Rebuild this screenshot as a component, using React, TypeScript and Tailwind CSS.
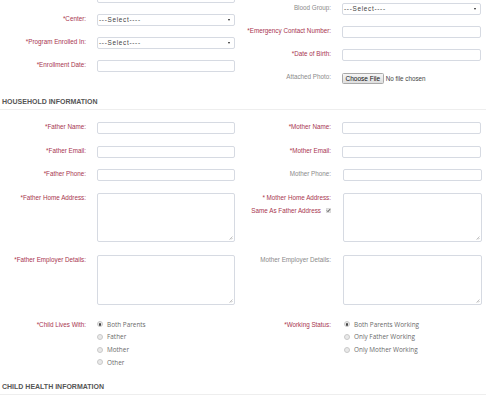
import type { ReactNode } from 'react'

const RED = 'text-[#a8354f]'
const GRAY = 'text-[#8a8a8a]'

function Label({ text, req }: { text: string; req?: boolean }) {
  return (
    <div className={`w-[86px] shrink-0 text-right text-[6.3px] leading-[9px] whitespace-nowrap ${req ? RED : GRAY}`}>
      {text}
    </div>
  )
}

function Field({ label, req, children }: { label?: string; req?: boolean; children: ReactNode }) {
  return (
    <div className="flex items-start w-[245px]">
      {label ? <Label text={label} req={req} /> : <div className="w-[86px] shrink-0" />}
      <div className="ml-[11px] w-[138px]">{children}</div>
    </div>
  )
}

function TextInput() {
  return <div className="h-[12px] w-full rounded-[2px] border border-[#d6dae2] bg-white" />
}

function TextArea({ h }: { h: string }) {
  return (
    <div className={`relative w-full rounded-[2px] border border-[#d6dae2] bg-white ${h}`}>
      {/* resize grip */}
      <svg className="absolute right-[1px] bottom-[1px]" width="4" height="4" viewBox="0 0 4 4">
        <path d="M0.5 3.5 L3.5 0.5 M2 3.5 L3.5 2" stroke="#9a9a9a" strokeWidth="0.6" />
      </svg>
    </div>
  )
}

function Select() {
  return (
    <div className="relative h-[12px] w-full rounded-[2px] border border-[#d6dae2] bg-white">
      <span className="absolute left-[1px] top-0 text-[6.4px] leading-[10px] tracking-[0.7px] text-[#444]">---Select----</span>
      <span className="absolute right-[4px] top-[4px] h-0 w-0 border-x-[1.5px] border-t-[2.5px] border-x-transparent border-t-[#222]" />
    </div>
  )
}

function Radio({ label, checked }: { label: string; checked?: boolean }) {
  return (
    <div className="flex h-[12.7px] items-center gap-[4px]">
      <span className="flex h-[6px] w-[6px] items-center justify-center rounded-full border border-[#c9c9c9] bg-[#e9e9e9]">
        {checked && <span className="h-[2.5px] w-[2.5px] rounded-full bg-[#444]" />}
      </span>
      <span className="font-['Open_Sans',sans-serif] text-[6.4px] text-[#6a6a6a]">{label}</span>
    </div>
  )
}

function Header({ text, className }: { text: string; className?: string }) {
  return (
    <div className={`w-[486px] border-b border-[#eeeeee] pb-[3px] pl-[2px] text-[7px] font-bold leading-[9px] text-[#555] ${className ?? ''}`}>
      {text}
    </div>
  )
}

export default function App() {
  return (
    <div className="h-[400px] w-[495px] overflow-hidden bg-white font-['Liberation_Sans',Arial,sans-serif]">
      {/* top part of the child form, two independent columns */}
      <div className="flex items-start">
        <div className="-mt-[9px] flex flex-col gap-[11px]">
          <Field><TextInput /></Field>
          <Field label="*Center:" req><Select /></Field>
          <Field label="*Program Enrolled In:" req><Select /></Field>
          <Field label="*Enrollment Date:" req><TextInput /></Field>
        </div>
        <div className="mt-[3px] flex flex-col gap-[11px]">
          <Field label="Blood Group:"><div className="w-[139px]"><Select /></div></Field>
          <Field label="*Emergency Contact Number:" req><div className="w-[139px]"><TextInput /></div></Field>
          <Field label="*Date of Birth:" req><div className="w-[139px]"><TextInput /></div></Field>
          <Field label="Attached Photo:">
            <div className="flex h-[12px] items-center gap-[2px]">
              <span className="mt-[1px] flex h-[10.5px] items-center rounded-[1.5px] border border-[#a9a9a9] bg-gradient-to-b from-[#f6f6f6] to-[#dedede] px-[2.5px] text-[6.5px] text-[#111]">
                Choose File
              </span>
              <span className="mt-[1px] text-[6.3px] text-[#444]">No file chosen</span>
            </div>
          </Field>
        </div>
      </div>

      <Header text="HOUSEHOLD INFORMATION" className="mt-[13px]" />

      <div className="mt-[12px] flex">
        <Field label="*Father Name:" req><TextInput /></Field>
        <Field label="*Mother Name:" req><div className="w-[139px]"><TextInput /></div></Field>
      </div>
      <div className="mt-[12px] flex">
        <Field label="*Father Email:" req><TextInput /></Field>
        <Field label="*Mother Email:" req><div className="w-[139px]"><TextInput /></div></Field>
      </div>
      <div className="mt-[11px] flex">
        <Field label="*Father Phone:" req><TextInput /></Field>
        <Field label="Mother Phone:"><div className="ml-[1px] w-[139px]"><TextInput /></div></Field>
      </div>
      <div className="mt-[12px] flex">
        <Field label="*Father Home Address:" req><TextArea h="h-[49px]" /></Field>
        <div className="flex w-[245px] items-start">
          <div className="w-[86px] shrink-0">
            <Label text="* Mother Home Address:" req />
            <div className={`mt-[4px] flex items-center justify-end gap-[5px] text-[6.3px] leading-[9px] whitespace-nowrap ${RED}`}>
              <span>Same As Father Address</span>
              <svg width="5" height="5" viewBox="0 0 5 5" className="shrink-0">
                <rect x="0.25" y="0.25" width="4.5" height="4.5" rx="0.5" fill="#e6e6e6" stroke="#bdbdbd" strokeWidth="0.5" />
                <path d="M1 2.6 L2 3.6 L4 1.2" stroke="#333" strokeWidth="0.9" fill="none" />
              </svg>
            </div>
          </div>
          <div className="ml-[12px] w-[139px]"><TextArea h="h-[49px]" /></div>
        </div>
      </div>
      <div className="mt-[13px] flex">
        <Field label="*Father Employer Details:" req><TextArea h="h-[50px]" /></Field>
        <Field label="Mother Employer Details:"><div className="ml-[1px] w-[139px]"><TextArea h="h-[50px]" /></div></Field>
      </div>
      <div className="mt-[15px] flex items-start">
        <Field label="*Child Lives With:" req>
          <div className="-mt-[2px]">
            <Radio label="Both Parents" checked />
            <Radio label="Father" />
            <Radio label="Mother" />
            <Radio label="Other" />
          </div>
        </Field>
        <Field label="*Working Status:" req>
          <div className="-mt-[2px] ml-[2px]">
            <Radio label="Both Parents Working" checked />
            <Radio label="Only Father Working" />
            <Radio label="Only Mother Working" />
          </div>
        </Field>
      </div>

      <Header text="CHILD HEALTH INFORMATION" className="mt-[13px]" />
    </div>
  )
}
